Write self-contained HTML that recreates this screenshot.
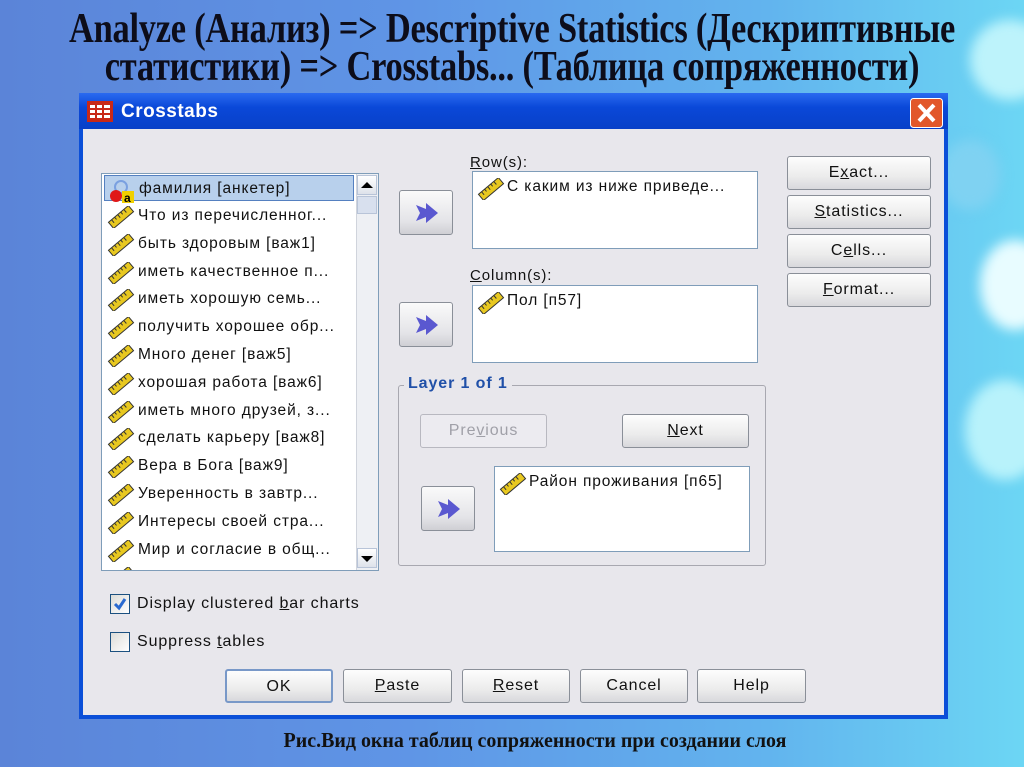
<!DOCTYPE html>
<html><head><meta charset="utf-8"><style>
*{margin:0;padding:0;box-sizing:border-box}
body{width:1024px;height:767px;overflow:hidden;position:relative;font-family:"Liberation Sans","DejaVu Sans",sans-serif;
background:linear-gradient(90deg,#5b84d8 0%,#5f95e6 40%,#62b4ee 75%,#6cd6f4 100%);}
.bub{position:absolute;border-radius:50%;filter:blur(6px)}
.title{position:absolute;left:-500px;width:2024px;text-align:center;font-family:"Liberation Serif",serif;font-weight:bold;font-size:42px;line-height:48px;color:#0d0d1a;transform:scaleX(.82);transform-origin:1012px 0;white-space:nowrap;letter-spacing:-0.3px}
.dlg{position:absolute;left:79px;top:93px;width:869px;height:626px;background:#0b4fd8;}
.tb{position:absolute;left:0;top:0;width:869px;height:36px;background:linear-gradient(#2a6af0,#0a48d8 40%,#0840c8);}
.tb span{position:absolute;left:42px;top:8px;color:#fff;font-weight:bold;font-size:19px;letter-spacing:.5px}
.body{position:absolute;left:4px;top:36px;width:861px;height:586px;background:#e8e7ec;letter-spacing:.9px}
.a{position:absolute}
.btn{position:absolute;border:1px solid #8a8f98;border-radius:3px;background:linear-gradient(#fdfdfd,#ececec 60%,#d8d8dc);font-size:16px;text-align:center;color:#111}
.box{position:absolute;background:#fff;border:1px solid #7f9db9}
.lbl{position:absolute;font-size:15px;color:#111}
.row{position:absolute;left:2px;height:26px;width:250px;font-size:15.5px;color:#111;white-space:nowrap}
.row svg{position:absolute;left:3px;top:3px}
.row span{position:absolute;left:34px;top:4px}
u{text-decoration:underline}
.arr{position:absolute;border:1px solid #8a8f98;border-radius:3px;background:linear-gradient(#fafafa,#e4e4e8 70%,#cfcfd4)}
.arr svg{position:absolute;left:15px;top:11px}
</style></head><body>
<div class="bub" style="left:970px;top:20px;width:80px;height:80px;background:#bdf3fb"></div>
<div class="bub" style="left:980px;top:240px;width:70px;height:90px;background:#e8fcff"></div>
<div class="bub" style="left:965px;top:380px;width:80px;height:100px;background:#b8f2fb"></div>
<div class="bub" style="left:940px;top:140px;width:60px;height:70px;background:#7fd2f2"></div>
<div class="title" style="top:5px">Analyze (Анализ) =&gt; Descriptive Statistics (Дескриптивные</div>
<div class="title" style="top:43px">статистики) =&gt; Crosstabs... (Таблица сопряженности)</div>

<div class="dlg">
 <div class="tb">
  <svg class="a" style="left:8px;top:8px" width="26" height="21"><rect width="26" height="21" fill="#c82818"/><g fill="#fff"><rect x="3" y="4" width="5" height="3"/><rect x="10" y="4" width="5" height="3"/><rect x="17" y="4" width="6" height="3"/><rect x="3" y="9" width="5" height="3"/><rect x="10" y="9" width="5" height="3"/><rect x="17" y="9" width="6" height="3"/><rect x="3" y="14" width="5" height="3"/><rect x="10" y="14" width="5" height="3"/><rect x="17" y="14" width="6" height="3"/></g></svg>
  <span>Crosstabs</span>
  <svg class="a" style="left:831px;top:5px" width="33" height="30"><rect x=".5" y=".5" width="32" height="29" rx="3" fill="#e2572a" stroke="#fff"/><path d="M9 7L24 23M24 7L9 23" stroke="#fff" stroke-width="4"/></svg>
 </div>
 <div class="body">
  <div class="box" style="left:18px;top:44px;width:278px;height:398px;overflow:hidden">
   <div class="row" style="top:1px;background:#b8d0ec;border:1px solid #5580c0;width:250px"><svg width="28" height="24"><circle cx="13" cy="8" r="6" fill="none" stroke="#7aa0e0" stroke-width="2"/><circle cx="8" cy="17" r="6" fill="#e01818"/><rect x="14" y="12" width="12" height="12" fill="#f0d000"/><text x="16" y="23" font-size="12" font-weight="bold" font-family="Liberation Sans">a</text></svg><span>фамилия [анкетер]</span></div>
   <div id="rows"></div>
  </div>
  <div class="a" style="left:273px;top:45px;width:22px;height:396px;background:#eef0f4;border-left:1px solid #d0d4dc"></div>
  <div class="a" style="left:274px;top:46px;width:20px;height:20px;background:linear-gradient(#fff,#dde2ea);border:1px solid #b8c4d8"><div style="margin:6px auto 0;width:0;height:0;border-left:6px solid transparent;border-right:6px solid transparent;border-bottom:6px solid #000"></div></div>
  <div class="a" style="left:274px;top:67px;width:20px;height:18px;background:#d8e0ee;border:1px solid #b8c4d8"></div>
  <div class="a" style="left:274px;top:419px;width:20px;height:20px;background:linear-gradient(#fff,#dde2ea);border:1px solid #b8c4d8"><div style="margin:7px auto 0;width:0;height:0;border-left:6px solid transparent;border-right:6px solid transparent;border-top:6px solid #000"></div></div>

  <div class="arr" style="left:316px;top:61px;width:54px;height:45px"><svg width="24" height="22"><path d="M1 3L11 7L11 1L23 11L11 21L11 15L1 19L5 11Z" fill="#5a58d0"/></svg></div>
  <div class="arr" style="left:316px;top:173px;width:54px;height:45px"><svg width="24" height="22"><path d="M1 3L11 7L11 1L23 11L11 21L11 15L1 19L5 11Z" fill="#5a58d0"/></svg></div>
  <div class="arr" style="left:338px;top:357px;width:54px;height:45px"><svg width="24" height="22"><path d="M1 3L11 7L11 1L23 11L11 21L11 15L1 19L5 11Z" fill="#5a58d0"/></svg></div>

  <div class="lbl" style="left:387px;top:25px"><u>R</u>ow(s):</div>
  <div class="box" style="left:389px;top:42px;width:286px;height:78px"><div class="row" style="top:3px;left:1px"><svg width="28" height="22"><g transform="translate(14 11) rotate(-40)"><rect x="-13" y="-4" width="26" height="8" fill="#e8c820" stroke="#333" stroke-width="1"/><path d="M-9 -4v4M-5 -4v3M-1 -4v4M3 -4v3M7 -4v4" stroke="#333"/></g></svg><span style="left:33px;top:3px">С каким из ниже приведе...</span></div></div>
  <div class="lbl" style="left:387px;top:138px"><u>C</u>olumn(s):</div>
  <div class="box" style="left:389px;top:156px;width:286px;height:78px"><div class="row" style="top:3px;left:1px"><svg width="28" height="22"><g transform="translate(14 11) rotate(-40)"><rect x="-13" y="-4" width="26" height="8" fill="#e8c820" stroke="#333" stroke-width="1"/><path d="M-9 -4v4M-5 -4v3M-1 -4v4M3 -4v3M7 -4v4" stroke="#333"/></g></svg><span style="left:33px;top:3px">Пол [п57]</span></div></div>

  <div class="a" style="left:315px;top:256px;width:368px;height:181px;border:1px solid #a8a8b0;border-radius:3px"></div>
  <div class="a" style="left:321px;top:246px;padding:0 4px;background:#e8e7ec;color:#2050a8;font-weight:bold;font-size:16px">Layer 1 of 1</div>
  <div class="btn" style="left:337px;top:285px;width:127px;height:34px;line-height:32px;color:#a0a0a8;background:#ecebf0;border-color:#b8b8c0">Pre<u>v</u>ious</div>
  <div class="btn" style="left:539px;top:285px;width:127px;height:34px;line-height:32px"><u>N</u>ext</div>
  <div class="box" style="left:411px;top:337px;width:256px;height:86px"><div class="row" style="top:3px;left:1px"><svg width="28" height="22"><g transform="translate(14 11) rotate(-40)"><rect x="-13" y="-4" width="26" height="8" fill="#e8c820" stroke="#333" stroke-width="1"/><path d="M-9 -4v4M-5 -4v3M-1 -4v4M3 -4v3M7 -4v4" stroke="#333"/></g></svg><span style="left:33px;top:3px">Район проживания [п65]</span></div></div>

  <div class="btn" style="left:704px;top:27px;width:144px;height:34px;line-height:32px">E<u>x</u>act...</div>
  <div class="btn" style="left:704px;top:66px;width:144px;height:34px;line-height:32px"><u>S</u>tatistics...</div>
  <div class="btn" style="left:704px;top:105px;width:144px;height:34px;line-height:32px">C<u>e</u>lls...</div>
  <div class="btn" style="left:704px;top:144px;width:144px;height:34px;line-height:32px"><u>F</u>ormat...</div>

  <div class="a" style="left:27px;top:465px;width:20px;height:20px;border:1px solid #1c5180;background:linear-gradient(135deg,#dcdcd8,#fff)"><svg width="18" height="18"><path d="M4 9L8 13L14 4" stroke="#2a6ad0" stroke-width="3" fill="none"/></svg></div>
  <div class="lbl" style="left:54px;top:466px;font-size:16px">Display clustered <u>b</u>ar charts</div>
  <div class="a" style="left:27px;top:503px;width:20px;height:20px;border:1px solid #1c5180;background:linear-gradient(135deg,#dcdcd8,#fff)"></div>
  <div class="lbl" style="left:54px;top:504px;font-size:16px">Suppress <u>t</u>ables</div>

  <div class="btn" style="left:142px;top:540px;width:108px;height:34px;line-height:31px;border:2px solid #7898c8">OK</div>
  <div class="btn" style="left:260px;top:540px;width:109px;height:34px;line-height:32px"><u>P</u>aste</div>
  <div class="btn" style="left:379px;top:540px;width:108px;height:34px;line-height:32px"><u>R</u>eset</div>
  <div class="btn" style="left:497px;top:540px;width:108px;height:34px;line-height:32px">Cancel</div>
  <div class="btn" style="left:614px;top:540px;width:109px;height:34px;line-height:32px">Help</div>
 </div>
</div>
<div class="a" style="left:0;top:728px;width:1070px;text-align:center;font-family:'Liberation Serif',serif;font-weight:bold;font-size:21px;color:#111;transform:scaleX(.95);transform-origin:535px 0">Рис.Вид окна таблиц сопряженности при создании слоя</div>
<script>
var t=["Что из перечисленног...","быть здоровым [важ1]","иметь качественное п...","иметь хорошую семь...","получить хорошее обр...","Много денег [важ5]","хорошая работа [важ6]","иметь много друзей, з...","сделать карьеру [важ8]","Вера в Бога [важ9]","Уверенность в завтр...","Интересы своей стра...","Мир и согласие в общ...","..."];
var ic='<svg width="28" height="22"><g transform="translate(14 11) rotate(-40)"><rect x="-13" y="-4" width="26" height="8" fill="#e8c820" stroke="#333" stroke-width="1"/><path d="M-9 -4v4M-5 -4v3M-1 -4v4M3 -4v3M7 -4v4" stroke="#333"/></g></svg>';
var h="";for(var i=0;i<t.length;i++){h+='<div class="row" style="top:'+(29+i*27.8)+'px">'+ic+'<span>'+t[i]+'</span></div>';}
document.getElementById("rows").innerHTML=h;
</script>
</body></html>
